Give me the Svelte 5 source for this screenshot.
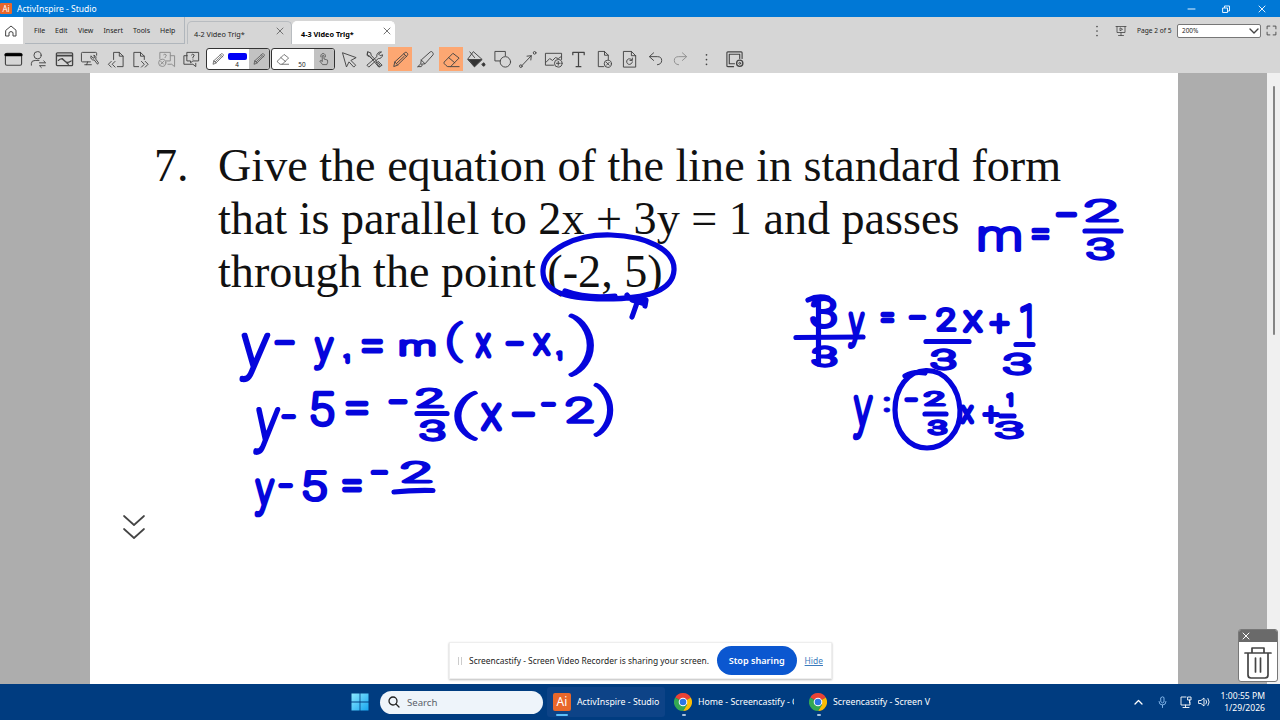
<script>
    const menus = [
        { label: "File", width: 21 },
        { label: "Edit", width: 23 },
        { label: "View", width: 25.5 },
        { label: "Insert", width: 29.5 },
        { label: "Tools", width: 27 },
        { label: "Help", width: 26 },
    ];

    const icons = {
        window: `<rect x="1.500" y="3.500" width="17" height="12.500" rx="1.500" stroke-width="1.200"/><path d="M2 5h16" stroke="#000" stroke-width="3.200"/>`,
        user: `<circle cx="9" cy="5.500" r="3.800"/><path d="M2.500 16v-2q0-3 4-3h4M11 13.500h6.500l-2-2M17 16.500h-6l2 2"/>`,
        annotate: `<rect x="1.500" y="3" width="17" height="13.500" rx="1" stroke-width="1.400"/><path d="M2 6h16" stroke-width="1.800"/><path d="M3.500 11q3-3 5.500-.5t4 2.500 4-1.500M7.500 9l6.500 6" stroke-width="1.300"/>`,
        desktop: `<path d="M11 12.500H2.500q-1 0-1-1v-8q0-1 1-1h14q1 0 1 1v2M8 12.500l-1 3M5 15.500h7M11.500 6.500a3 3 0 0 0 3.500 4l3.500 4.500 1-1.500-3-4a3 3 0 0 0-2-4l1 2.500-1.500.500z"/>`,
        prev: `<path d="M8 10V2.500h6l4 4v11h-6M14 2.500v4h4M5.500 12l-3 3 3 3M9.500 12l-3 3 3 3"/>`,
        next: `<path d="M8 17.500H3v-15h7l4 4V10M10 2.500v4h4M11 12l3 3-3 3M15 12l3 3-3 3"/>`,
        vote: `<path d="M3 9V2.500h11v9H9.500M14 6h4.500v11.500l-3-2.500h-4M7 5q1.500-1.500 2.500 0t-1 2.500V8"/><circle cx="5.500" cy="13.500" r="3.800"/><path d="m4 12 3 3m0-3-3 3"/>`,
        question: `<path d="M5.500 2.500h12v9h-6l-2.500 2v-2H5.500zM5.500 6H2v9h9.500l3 2.500V14M10 5.200q1.500-1.700 2.500-.2t-1 2.300v.7M11.500 9.500v.1"/>`,
        cursor: `<path d="m3 3 14 5-5.500 3 5 5-2 2-5-5.500-2.500 5z"/>`,
        tools: `<path d="m3 2 3 1 .5 2.500L16 16l-1.500 2L5 6.500 3 5.500zM17 2a4 4 0 0 0-4.500 5L2 16l2 2L14 9a4 4 0 0 0 4.500-4L16 6l-1.500-1.500zM3 2c-2 4 0 5 2 5l3 3M12 13l3 5 3-2-4-4"/>`,
        pencil: `<path d="m3 17 1-4.500L15 2.500q1.500-.5 2.300 1T17 6L7 15.800zM4 12.500l3 3.300M13.500 4l3 3M6 14l8-7.500"/>`,
        marker: `<path d="M2 17.500h3.500l1-1.500M2 17.500l3-3 .5-4L15 2q1.500-1 2.500.5t.5 2.500L9.500 14.500l-4 .5M5.500 10.500l4 4"/>`,
        eraser: `<path d="m2.500 12.500 9-9 6.500 5-9 9H6q-2-1-3.500-3zM7 8l6.500 5.500M9 17.500h9"/>`,
        bucket: `<path d="m7 2 9 8-8 7.500-7-7.500zM3 2l5 6"/><path d="m1.500 10h14L8 17.500zM16 15q1.500-3 3 0 0 2-1.500 2T16 15z" fill="#333"/>`,
        shapes: `<path d="M8 11.500H2v-10h11v4.500"/><circle cx="13" cy="12.500" r="5.500"/>`,
        connector: `<path d="M4.500 16 14 6M9.500 6.500l4.500-.5-.5 4.500"/><circle cx="3" cy="17" r="1.400"/><circle cx="17.500" cy="3" r="1.400"/>`,
        image: `<path d="M10 16H1.500V3.500h17V10M2 13l4-4 3 2 3-3 3 1 3-2"/><circle cx="15" cy="14" r="4"/><path d="M13 14h4M15 12v4"/>`,
        text: `<path d="M4 5V2.500h12V5M10 2.500v15M7.500 17.500h5" stroke-width="1.300"/>`,
        pageDelete: `<path d="M9 17.500H3.500v-16H10l4 4V10M10 1.500v4h4"/><circle cx="13.500" cy="14.500" r="3.800"/><path d="m12 13 3 3m0-3-3 3"/>`,
        pageReset: `<path d="M4 1.500h8l4.500 4.500v12H4zM12 1.500V6h4.500M12.500 10.500a3 3 0 1 0 .5 2M13 8.500v2.500h-2.500"/>`,
        undo: `<path d="M8 3 3.500 7 8 11M4 7h8q4.500 0 4.500 4T12 15.500"/>`,
        redo: `<path d="M12 3 16.500 7 12 11M16 7H8q-4.500 0-4.500 4T8 15.500" stroke="#8e8e8e"/>`,
        dots: `<path d="M10 5v.1M10 10v.1M10 15v.1" stroke-width="1.800"/>`,
        customise: `<path d="M9 17.500H3q-1 0-1-1V3q0-1 1-1h14q1 0 1 1v6M10 14.500H4.500v-10h11V9" stroke-width="1.200"/><circle cx="15.500" cy="14" r="3.300" stroke-width="1.400"/><circle cx="15.500" cy="14" r="1"/>`,
        touch: `<path d="M7.500 13V5.500q1.300-1.500 2.500 0V10l5 1.500q1 3-1 6.500H8L4 13q1-2 3.500 0M5.500 7a3.500 3.500 0 1 1 6.500 0"/>`,
    };

    const leftTools = ["window", "user", "annotate", "desktop", "prev", "next", "vote", "question"];
    const rightTools = [
        "cursor", "tools", "pencil", "marker", "eraser", "bucket", "shapes", "connector",
        "image", "text", "pageDelete", "pageReset", "undo", "redo", "dots",
    ];
    const active = ["pencil", "eraser"];

    // handwritten marks: character, left, top, right, bottom, slant
    const ink = [
        ["y", 238, 332, 271, 382, 0.08], ["−", 274, 339, 295, 346], ["y", 313, 336.5, 334.5, 371, 0.05],
        ["1", 343, 353, 350, 364], ["=", 361.5, 339, 383, 353.5], ["m", 399, 340, 436, 357.5],
        ["(", 446.5, 321.5, 463.5, 364], ["x", 475, 333, 491.5, 358.5], ["−", 505, 340, 524, 346],
        ["x", 532.5, 333, 551, 356.5], ["1", 556, 351, 562.5, 361.5], [")", 568, 314, 594.5, 377.5],

        ["y", 252, 406.5, 281, 455, 0.1], ["−", 281, 414, 296, 420], ["5", 310, 391, 334.5, 427.5],
        ["=", 345.5, 400.5, 368.5, 415.5], ["−", 388, 399, 407.5, 405], ["2", 415.5, 386.5, 444.5, 408.5],
        ["3", 419, 420, 446, 442], ["(", 454, 390, 478.5, 441], ["x", 480.5, 402.5, 502.5, 431],
        ["−", 511, 411.5, 535, 417.5], ["−", 540.5, 401, 556, 407], ["2", 565, 396, 594, 423.5],
        [")", 593, 382.5, 613.5, 437.5],

        ["y", 253.5, 477.5, 275, 517, 0.04], ["−", 278, 483, 293, 489], ["5", 302, 470, 327, 502.5],
        ["=", 342, 479, 362, 492.5], ["−", 370, 469, 388, 475], ["2", 400, 461.5, 432.5, 484],

        ["m", 978, 226, 1021.5, 252.5], ["=", 1031.5, 227.5, 1049.5, 240.5], ["−", 1055.5, 212, 1077.5, 218],
        ["2", 1084, 198, 1119, 223], ["3", 1086, 237.5, 1115, 260.5],

        ["3", 810, 295, 837.5, 329], ["3", 811, 345.5, 838, 367.5], ["y", 847, 311, 865, 349, 0.04],
        ["=", 880.5, 312, 894.5, 323.5], ["−", 908, 314.5, 926, 320.5], ["2", 935.5, 306.5, 956.5, 332],
        ["x", 962.5, 311, 983.5, 333.5], ["+", 989, 313, 1010, 335], ["1", 1020, 302, 1032, 338.5],
        ["3", 930, 349, 957, 371], ["3", 1002.5, 352, 1032, 376],

        ["y", 852, 394, 873.5, 440, 0.04], [":", 883.5, 397, 890, 413], ["−", 904, 397, 918, 403],
        ["2", 923, 390, 946, 407], ["3", 927, 419, 948, 435.5], ["x", 960, 405, 974.5, 424.5],
        ["+", 982, 405, 1000, 424], ["1", 1006, 392, 1013.5, 407], ["3", 994.5, 420.5, 1024.5, 440],
    ];

    const ctx = document.createElement("canvas").getContext("2d");

    // stretch a character so that its stroked outline fills the box it was written in
    function place([char, left, top, right, bottom, slant = 0]) {
        const dots = char === ":";
        const weight = dots ? 700 : 100;
        const pen = dots ? 0.8 : "()".includes(char) ? 3.6 : 4.5;
        ctx.font = `${weight} 100px Roboto`;
        const m = ctx.measureText(char);
        const gw = (m.actualBoundingBoxRight + m.actualBoundingBoxLeft) / 100;
        const gh = (m.actualBoundingBoxAscent + m.actualBoundingBoxDescent) / 100;
        const h = bottom - top;
        const w = right - left - slant * (h - pen);
        const byWidth = (w - pen) / gw;
        const byHeight = (h - pen) / gh;
        const size = char === "−" ? byWidth : dots ? byHeight : Math.sqrt(byWidth * byHeight);
        const sx = w / (gw * size + pen);
        const sy = char === "−" ? 1 : h / (gh * size + pen);
        const mid = ((m.actualBoundingBoxAscent - m.actualBoundingBoxDescent) / 200) * size;
        const center = ((m.actualBoundingBoxRight - m.actualBoundingBoxLeft) / 200) * size;
        return {
            char,
            size,
            weight,
            pen,
            transform:
                `translate(${(left + right) / 2} ${(top + bottom) / 2}) ` +
                `matrix(1 0 ${-slant} 1 0 0) scale(${sx} ${sy}) translate(${-center} ${mid})`,
        };
    }

    const marks = ink.map(place);
</script>

<div class="screen">
    <header class="titlebar">
        <span class="logo">Ai</span>
        <span class="title">ActivInspire - Studio</span>
        <svg class="controls" viewBox="0 0 84 10">
            <path d="M3 5h7" />
            <path d="M38 4h4.500v4.500H38zM39.500 3.500V2h5v5H43" />
            <path d="m74 2 6 6m0-6-6 6" />
        </svg>
    </header>

    <div class="menurow">
        <div class="home">
            <svg viewBox="0 0 14 14"><path d="M2 6.200 7 2l5 4.200V12H9V8.500q-2-2-4 0V12H2z" /></svg>
        </div>
        <nav class="menus">
            {#each menus as menu}
                <span style="width: {menu.width}px">{menu.label}</span>
            {/each}
        </nav>
        <div class="tab">
            <span>4-2 Video Trig*</span>
            <svg viewBox="0 0 8 8"><path d="m1 1 6 6m0-6-6 6" /></svg>
        </div>
        <div class="tab current">
            <span>4-3 Video Trig*</span>
            <svg viewBox="0 0 8 8"><path d="m1 1 6 6m0-6-6 6" /></svg>
        </div>
        <div class="page-tools">
            <svg class="icon" viewBox="0 0 20 20">{@html icons.dots}</svg>
            <svg class="present" viewBox="0 0 12 12">
                <path d="M1 1.500h10M2 1.500v6h8v-6M6 7.500v3M3.500 10.500h5M5 3.200v2.600l2.200-1.300z" />
            </svg>
            <span class="page">Page 2 of 5</span>
            <div class="zoom">
                <span>200%</span>
                <svg viewBox="0 0 10 6"><path d="m1 1 4 4 4-4" /></svg>
            </div>
            <svg class="full" viewBox="0 0 10 10"><path d="M1 3.500V1h2.500M6.500 1H9v2.500M9 6.500V9H6.500M3.500 9H1V6.500" /></svg>
        </div>
    </div>

    <div class="toolbar">
        {#each leftTools as name}
            <div class="tool" class:faded={name === "vote"}><svg class="icon" viewBox="0 0 20 20">{@html icons[name]}</svg></div>
        {/each}
        <div class="preset">
            <svg class="small" viewBox="0 0 20 20">{@html icons.pencil}</svg>
            <div class="value"><i></i><span>4</span></div>
            <div class="side"><svg class="small" viewBox="0 0 20 20">{@html icons.pencil}</svg></div>
        </div>
        <div class="preset">
            <svg class="small" viewBox="0 0 20 20">{@html icons.eraser}</svg>
            <div class="value"><span>50</span></div>
            <div class="side"><svg class="small" viewBox="0 0 20 20">{@html icons.touch}</svg></div>
        </div>
        <div class="rest">
            {#each rightTools as name}
                <div class="tool" class:active={active.includes(name)}><svg class="icon" viewBox="0 0 20 20">{@html icons[name]}</svg></div>
            {/each}
        </div>
        <div class="tool last"><svg class="icon" viewBox="0 0 20 20">{@html icons.customise}</svg></div>
    </div>

    <main class="desk">
        <section class="paper">
            <div class="question">
                <span class="number">7.</span>
                <div class="lines">
                    <p>Give the equation of the line in standard form</p>
                    <p>that is parallel to 2x + 3y = 1 and passes</p>
                    <p>through the point (-2, 5)</p>
                </div>
            </div>
        </section>
        <div class="scroll"><i></i></div>

        <svg class="ink" viewBox="0 73 1280 611">
            {#each marks as mark}
                <text font-size={mark.size} font-weight={mark.weight} transform={mark.transform} stroke-width={mark.pen}>{mark.char}</text>
            {/each}
            <!-- fraction bars -->
            <path d="M417 413.500h30M394 492q18-2 39-1.500M1085 231h36M796 337.500 863 337M926 341.500h43M1016 344.500h17M925 414h21M1001 416h13" />
            <!-- cancelled threes -->
            <path d="M818.500 298v66M808 300q10-5 20-2" />
            <!-- circles and underlines -->
            <path d="M543 270C544 250 575 234 611 235S675 250 674 270 648 299 605 299 542 290 543 270M565 291q22 8 50 5M627 295q2 4 6 3l13 2-1 6M638 300l-6 17M632 300l10 3" />
            <path d="M926 370.500C945 370 959 388 960 410S945 448 927 448 895 432 895 410 908 371 926 370.500M905 376q9-5 20-3" />
        </svg>

        <svg class="more" viewBox="0 0 24 28"><path d="m2 2 10 9 10-9M2 15l10 9 10-9" /></svg>

        <div class="share">
            <span class="grip"></span>
            <span class="message">Screencastify - Screen Video Recorder is sharing your screen.</span>
            <button>Stop sharing</button>
            <a href="#hide">Hide</a>
        </div>

        <div class="trash">
            <div class="trash-top"><svg viewBox="0 0 8 8"><path d="m1 1 6 6m0-6-6 6" /></svg></div>
            <svg class="bin" viewBox="0 0 28 34"><path d="M1 7h26M8 7V2h12v5M4 7v22q0 3 3 3h14q3 0 3-3V7M11.500 12v14M16.500 12v14" /></svg>
        </div>
    </main>

    <footer class="taskbar">
        <svg class="start" viewBox="0 0 18 18">
            <defs>
                <linearGradient id="win" x2="1" y2="1">
                    <stop stop-color="#8be8ff" />
                    <stop offset="1" stop-color="#16a5f0" />
                </linearGradient>
            </defs>
            <path fill="url(#win)" d="M.5.500h8.100v8.100H.5zM9.400.500h8.100v8.100H9.400zM.5 9.400h8.100v8.100H.5zM9.400 9.400h8.100v8.100H9.400z" />
        </svg>
        <div class="search">
            <svg viewBox="0 0 12 12"><circle cx="5" cy="5" r="4" /><path d="m8 8 3 3" /></svg>
            <span>Search</span>
        </div>
        <div class="app focused">
            <span class="logo big">Ai</span>
            <span>ActivInspire - Studio</span>
        </div>
        {#each ["Home - Screencastify - G", "Screencastify - Screen V"] as title}
            <div class="app chrome">
                <svg viewBox="0 0 18 18">
                    <path fill="#ea4335" d="M9 9 1.200 4.500a9 9 0 0 1 15.600 0z" />
                    <path fill="#fbbc04" d="M9 9h0l7.800-4.500A9 9 0 0 1 9 18l4-7z" />
                    <path fill="#34a853" d="M9 9 9 18A9 9 0 0 1 1.200 4.500z" />
                    <path fill="#34a853" d="M5 10 9 18l4-6z" />
                    <circle cx="9" cy="9" r="4.300" fill="#fff" />
                    <circle cx="9" cy="9" r="3.300" fill="#2b76e5" />
                </svg>
                <span>{title}</span>
            </div>
        {/each}
        <svg class="tray" viewBox="0 0 78 14">
            <path d="m2 9 3.500-3.500L9 9" stroke-width="1.300" />
            <path d="M28 2.500q1.500-1.500 3 0V7q-1.500 2-3 0zM26 6.500q0 3.500 3.500 3.500T33 6.500M29.500 10v2.500" stroke="#8bbdf0" />
            <path d="M53 2h-5v8h9V7M50 12.500h6M52.500 10v2M55 2h3v3h-3zM56.500 5v3" />
            <path d="M66 5.500h2L71 3v8L68 8.500h-2zM73 5q1.500 2 0 4M75 3.500q2.500 3.500 0 7" />
        </svg>
        <div class="clock"><span>1:00:55 PM</span><span>1/29/2026</span></div>
    </footer>
</div>

<style>
    .screen {
        width: 1280px;
        height: 720px;
        display: flex;
        flex-direction: column;
        overflow: hidden;
        font-family: "Noto Sans", "Open Sans", sans-serif;
        color: #222;
    }

    svg {
        display: block;
        flex: none;
        fill: none;
        stroke: #444;
        stroke-linecap: round;
        stroke-linejoin: round;
    }

    .titlebar {
        height: 17px;
        flex: none;
        display: flex;
        align-items: center;
        background: #0078d6;
        color: #fff;
        font-size: 8.5px;
    }

    .logo {
        width: 12px;
        height: 11px;
        border-radius: 1px;
        background: #e8672a;
        color: #fff;
        font-size: 8px;
        line-height: 11px;
        text-align: center;
    }

    .title {
        margin-left: 5px;
    }

    .controls {
        width: 84px;
        height: 10px;
        margin-left: auto;
        margin-right: 11px;
        stroke: #e4f2ff;
        stroke-width: 1;
    }

    .menurow {
        height: 27px;
        flex: none;
        display: flex;
        background: #d6d6d6;
    }

    .home {
        width: 23px;
        height: 27px;
        background: #fff;
        display: grid;
        place-items: center;
    }

    .home svg {
        width: 14px;
        height: 14px;
        margin-right: 1px;
    }

    .menus {
        width: 160px;
        height: 27px;
        margin-left: 2px;
        padding-left: 9px;
        box-sizing: border-box;
        border-bottom: 1px solid #b0b6bc;
        border-right: 1px solid #b0b6bc;
        display: flex;
        align-items: center;
        font-size: 7px;
    }

    .menus span {
        flex: none;
    }

    .tab {
        width: 105px;
        height: 23px;
        margin-top: 4px;
        margin-left: 2px;
        padding: 0 10px 0 6px;
        box-sizing: border-box;
        border: 1px solid #b8bcc0;
        border-bottom: none;
        border-radius: 5px 5px 0 0;
        display: flex;
        justify-content: space-between;
        align-items: center;
        font-size: 7.3px;
    }

    .tab span {
        margin-top: 2px;
    }

    .tab svg {
        width: 8px;
        height: 8px;
        margin-top: -4px;
        margin-right: -3px;
        stroke: #666;
        stroke-width: 0.9;
    }

    .tab.current {
        width: 103px;
        margin-left: 0;
        padding-left: 8px;
        padding-right: 6px;
        border-color: #fff;
        background: #fff;
        font-weight: bold;
        color: #000;
    }

    .page-tools {
        margin-left: auto;
        height: 27px;
        display: flex;
        align-items: center;
        font-size: 7px;
    }

    .page-tools .icon {
        width: 18px;
        height: 18px;
    }

    .present {
        width: 12px;
        height: 12px;
        margin-left: 9px;
        stroke-width: 0.8;
    }

    .page {
        width: 36px;
        margin-left: 10px;
        font-size: 6.6px;
        white-space: nowrap;
    }

    .zoom {
        width: 84px;
        height: 14px;
        margin-left: 4px;
        padding: 0 1px 0 4px;
        box-sizing: border-box;
        border: 1px solid #777;
        border-radius: 2px;
        background: #fff;
        display: flex;
        align-items: center;
        justify-content: space-between;
        font-size: 6.4px;
    }

    .zoom svg {
        width: 10px;
        height: 6px;
        stroke-width: 1.4;
    }

    .full {
        width: 11px;
        height: 11px;
        margin: 0 3px 0 5px;
        stroke-width: 0.8;
    }

    .toolbar {
        height: 29px;
        flex: none;
        box-sizing: border-box;
        padding: 1px 0 0 0.5px;
        display: flex;
        align-items: center;
        background: #d6d6d6;
    }

    .tool {
        width: 25.5px;
        height: 24px;
        display: grid;
        place-items: center;
    }

    .tool.active {
        background: linear-gradient(#fda772, #fda772) center / 24px 24px no-repeat;
    }

    .tool.faded {
        opacity: 0.5;
    }

    .icon {
        width: 19px;
        height: 19px;
        stroke-width: 1;
    }

    .preset {
        width: 64px;
        height: 22px;
        margin-left: 1.5px;
        box-sizing: border-box;
        border: 1.5px solid #333;
        border-radius: 3px;
        background: #fff;
        display: flex;
        align-items: center;
        overflow: hidden;
    }

    .preset + .preset {
        margin-left: 1px;
    }

    .small {
        width: 14px;
        height: 14px;
        margin-left: 4px;
    }

    .value {
        width: 24px;
        height: 19px;
        display: flex;
        flex-direction: column;
        align-items: center;
        justify-content: flex-end;
        font-size: 6.4px;
        line-height: 8px;
    }

    .value i {
        width: 19px;
        height: 7px;
        margin-bottom: 1px;
        border-radius: 2px;
        background: #0000f5;
    }

    .side {
        flex: 1;
        height: 22px;
        display: grid;
        place-items: center;
        background: #c2c2c2;
    }

    .side .small {
        margin: 0;
    }

    .rest {
        display: flex;
        margin-left: 1.5px;
    }

    .last {
        margin-left: 2.5px;
    }

    .desk {
        position: relative;
        height: 611px;
        flex: none;
        display: flex;
        background: #adadad;
    }

    .paper {
        width: 1088px;
        height: 611px;
        margin-left: 90px;
        box-sizing: border-box;
        padding: 65.5px 0 0 64px;
        background: #fff;
    }

    .question {
        display: flex;
        font-family: "Liberation Serif", serif;
        font-size: 46.15px;
        line-height: 53.4px;
        color: #111;
    }

    .number {
        width: 64px;
        flex: none;
    }

    .lines p {
        margin: 0;
        white-space: nowrap;
        width: max-content;
    }

    .scroll {
        width: 13px;
        height: 611px;
        margin-left: auto;
        background: #f0f0f0;
    }

    .scroll i {
        display: block;
        width: 2px;
        height: 249px;
        margin: 13px 0 0 6px;
        border-radius: 1px;
        background: #858585;
    }

    .ink {
        position: absolute;
        inset: 0;
        width: 1280px;
        height: 611px;
        stroke: #0505dc;
        stroke-width: 5.2;
    }

    .ink text {
        font-family: Roboto, sans-serif;
        fill: #0505dc;
    }

    .more {
        position: absolute;
        left: 122px;
        top: 441px;
        width: 24px;
        height: 28px;
        stroke-width: 1.7;
    }

    .share {
        position: absolute;
        left: 449px;
        top: 569px;
        width: 383px;
        height: 37px;
        box-sizing: border-box;
        padding: 0 8px;
        border: 1px solid #eee;
        box-shadow: 0 1px 2px #bbb;
        background: #fff;
        display: flex;
        align-items: center;
        font-size: 8.45px;
        white-space: nowrap;
    }

    .grip {
        width: 2px;
        height: 8px;
        border: solid #ccc;
        border-width: 0 1px;
    }

    .message {
        width: 241px;
        margin-left: 7px;
    }

    .share button {
        width: 80px;
        height: 29px;
        margin-left: 7px;
        padding: 0;
        border: none;
        border-radius: 15px;
        background: #0b57d0;
        color: #fff;
        font: 600 9.1px "Noto Sans", sans-serif;
    }

    .share a {
        margin-left: 8px;
        color: #3b7bbd;
    }

    .trash {
        position: absolute;
        left: 1238px;
        top: 556px;
        width: 40px;
        height: 53px;
        box-sizing: border-box;
        border: 1px solid #777;
        border-radius: 3px;
        overflow: hidden;
        background: #fff;
    }

    .trash-top {
        height: 12px;
        padding: 2px 0 0 3px;
        box-sizing: border-box;
        background: #6a6a6a;
    }

    .trash-top svg {
        width: 8px;
        height: 8px;
        stroke: #fff;
    }

    .bin {
        width: 28px;
        height: 34px;
        margin: 4px auto 0;
        stroke-width: 1.7;
    }

    .taskbar {
        height: 36px;
        flex: none;
        display: flex;
        align-items: center;
        background: #003c80;
        color: #fff;
        font-size: 8.8px;
        white-space: nowrap;
    }

    .start {
        width: 18px;
        height: 18px;
        margin-left: 351px;
        stroke: none;
    }

    .search {
        width: 163px;
        height: 23px;
        margin-left: 11px;
        padding-left: 8px;
        box-sizing: border-box;
        border-radius: 12px;
        background: #eef4fa;
        color: #5b6169;
        display: flex;
        align-items: center;
        gap: 7px;
        font-size: 9.6px;
    }

    .search svg {
        width: 12px;
        height: 12px;
        stroke: #222;
        stroke-width: 1.3;
    }

    .app {
        position: relative;
        display: flex;
        align-items: center;
        height: 30px;
        box-sizing: border-box;
    }

    .app::after {
        content: "";
        position: absolute;
        left: 8px;
        bottom: 1px;
        width: 4px;
        height: 2px;
        border-radius: 1px;
        background: #a9c3df;
    }

    .focused {
        width: 118px;
        margin-left: 4px;
        padding-left: 6px;
        border-radius: 3px;
        background: #0d4387;
    }

    .focused::after {
        left: 9px;
        width: 12px;
        background: #5cc1fa;
    }

    .logo.big {
        width: 18px;
        height: 18px;
        margin-right: 6px;
        border-radius: 2px;
        font-size: 12px;
        line-height: 18px;
    }

    .chrome {
        width: 122px;
        margin-left: 9px;
    }

    .chrome + .chrome {
        margin-left: 13px;
    }

    .chrome svg {
        width: 18px;
        height: 18px;
        margin-right: 6px;
        stroke: none;
    }

    .chrome span {
        width: 96px;
        overflow: hidden;
    }

    .chrome + .chrome span {
        width: 99px;
    }

    .tray {
        width: 78px;
        height: 14px;
        margin-left: auto;
        stroke: #fff;
        stroke-width: 0.9;
    }

    .clock {
        width: 54px;
        margin-right: 15px;
        display: flex;
        flex-direction: column;
        align-items: flex-end;
        font-size: 8.6px;
        line-height: 12px;
    }
</style>
